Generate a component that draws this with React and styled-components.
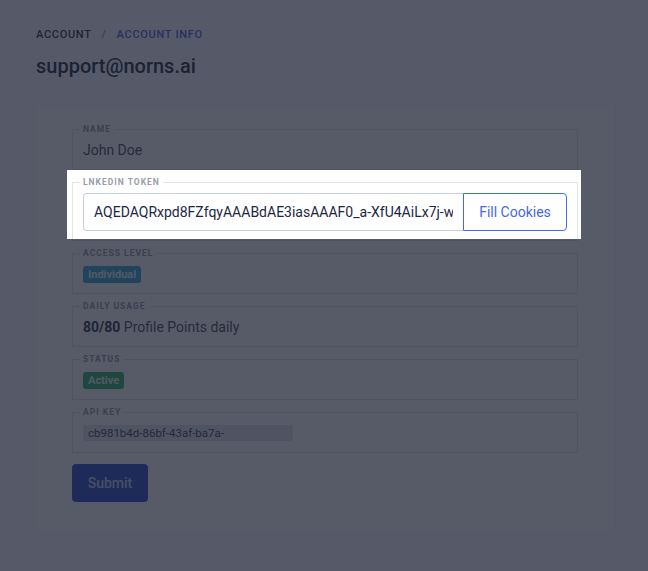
import React from 'react';
import styled, { createGlobalStyle } from 'styled-components';

const GlobalStyle = createGlobalStyle`
  html, body {
    margin: 0;
    padding: 0;
    background: #fbfcfd;
    font-family: Roboto, "Liberation Sans", Arial, sans-serif;
  }
  * { box-sizing: border-box; }
`;

const fields = [
  { label: 'Access Level', badge: 'Individual', tone: 'info' },
  { label: 'Daily Usage', usage: '80/80', text: 'Profile Points daily' },
  { label: 'Status', badge: 'Active', tone: 'success' },
];

function App() {
  return (
    <>
      <GlobalStyle />
      <Page>
        <Breadcrumb>
          <Crumb>Account</Crumb>
          <Slash>/</Slash>
          <Crumb $active>Account Info</Crumb>
        </Breadcrumb>
        <Title>support@norns.ai</Title>

        <Card>
          <Form>
            <Field>
              <Legend>Name</Legend>
              <Row>John Doe</Row>
            </Field>

            <Field $spotlight>
              <Legend>Lnkedin Token</Legend>
              <InputGroup>
                <TokenInput readOnly value="AQEDAQRxpd8FZfqyAAABdAE3iasAAAF0_a-XfU4AiLx7j-w" />
                <FillButton type="button">Fill Cookies</FillButton>
              </InputGroup>
            </Field>

            {fields.map((f) => (
              <Field key={f.label}>
                <Legend>{f.label}</Legend>
                <Row>
                  {f.badge && <Badge $tone={f.tone}>{f.badge}</Badge>}
                  {f.usage && (
                    <span><Strong>{f.usage}</Strong> {f.text}</span>
                  )}
                </Row>
              </Field>
            ))}

            <Field>
              <Legend>API Key</Legend>
              <Row>
                <KeyBox>cb981b4d-86bf-43af-ba7a-</KeyBox>
              </Row>
            </Field>

            <SubmitRow>
              <Submit type="button">Submit</Submit>
            </SubmitRow>
          </Form>
        </Card>
      </Page>
    </>
  );
}

export default App;

const Page = styled.div`
  min-height: 571px;
  padding: 26px 0 40px 36px;
`;

const Breadcrumb = styled.nav`
  display: flex;
  align-items: center;
  height: 16px;
  font-size: 11px;
  font-weight: 500;
  letter-spacing: 0.7px;
  text-transform: uppercase;
`;

const Crumb = styled.span`
  color: ${(p) => (p.$active ? '#5a6fe6' : '#3c4352')};
`;

const Slash = styled.span`
  color: #9aa0ab;
  margin: 0 10px;
`;

const Title = styled.h1`
  margin: 10px 0 0;
  font-size: 20px;
  line-height: 28px;
  font-weight: 500;
  color: #343c4d;
`;

const Card = styled.div`
  margin: 24px 33px 0 -1px;
  background: #ffffff;
  border: 1px solid #f5f6f8;
  border-bottom-color: transparent;
  border-radius: 2px;
  padding: 18px 36px 30px 36px;
`;

const Form = styled.form`
  display: flex;
  flex-direction: column;
  gap: 6px;
`;

const Field = styled.fieldset`
  margin: 0;
  min-width: 0;
  padding: 0 10px 9px;
  border: 1px solid #e3e5ea;
  border-radius: 0;

  ${(p) =>
    p.$spotlight &&
    `
    position: relative;
    &::after {
      content: '';
      position: absolute;
      top: -18px;
      left: -6px;
      right: -4px;
      bottom: 1px;
      pointer-events: none;
      box-shadow: 0 0 0 2000px rgba(18, 24, 42, 0.71);
    }
  `}
`;

const Legend = styled.legend`
  margin-left: -3px;
  padding: 0 3px;
  font-size: 8.5px;
  line-height: 12px;
  font-weight: 700;
  letter-spacing: 1px;
  text-transform: uppercase;
  color: #979eab;
`;

const Row = styled.div`
  display: flex;
  align-items: center;
  min-height: 20px;
  margin-top: 5px;
  font-size: 14px;
  color: #525a6a;
`;

const Strong = styled.b`
  font-weight: 700;
  color: #3a4150;
`;

const InputGroup = styled.div`
  display: flex;
  margin-top: 5px;
  height: 38px;
`;

const TokenInput = styled.input`
  flex: 1;
  min-width: 0;
  height: 38px;
  border: 1px solid #c7cfdc;
  border-right: none;
  border-radius: 4px 0 0 4px;
  padding: 0 10px;
  font-family: Roboto, "Liberation Sans", Arial, sans-serif;
  font-size: 14px;
  color: #1c2743;
  outline: none;
  background: #fff;
`;

const FillButton = styled.button`
  width: 104px;
  height: 38px;
  border: 1px solid #3b6cf3;
  border-radius: 0 4px 4px 0;
  background: #fff;
  color: #4468f0;
  font-family: Roboto, "Liberation Sans", Arial, sans-serif;
  font-size: 14px;
`;

const badgeTones = {
  info: { bg: '#3fb0d6', fg: '#e8f7fc' },
  success: { bg: '#3fb573', fg: '#e6f7ed' },
};

const Badge = styled.span`
  display: inline-block;
  height: 17px;
  line-height: 17px;
  padding: 0 5px;
  border-radius: 3px;
  font-size: 11px;
  font-weight: 700;
  background: ${(p) => badgeTones[p.$tone].bg};
  color: ${(p) => badgeTones[p.$tone].fg};
`;

const KeyBox = styled.span`
  display: block;
  width: 210px;
  height: 16px;
  line-height: 16px;
  padding: 0 5px;
  border-radius: 2px;
  background: #e4e6ea;
  color: #4d5362;
  font-size: 11.5px;
`;

const SubmitRow = styled.div`
  margin-top: 5px;
`;

const Submit = styled.button`
  width: 76px;
  height: 38px;
  border: none;
  border-radius: 4px;
  background: #3b5ccb;
  color: #c9d2ec;
  font-family: Roboto, "Liberation Sans", Arial, sans-serif;
  font-size: 14px;
  font-weight: 500;
`;
